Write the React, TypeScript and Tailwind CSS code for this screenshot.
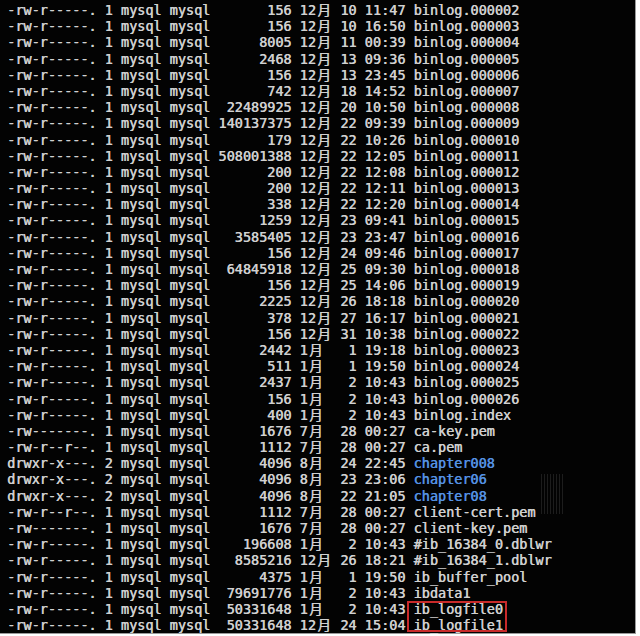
type Entry = {
  perms: string;
  links: number;
  size: number;
  month: number;
  day: number;
  time: string;
  name: string;
  dir?: boolean;
};

const RW = '-rw-r-----.';

const entries: Entry[] = [
  { perms: RW, links: 1, size: 156, month: 12, day: 10, time: '11:47', name: 'binlog.000002' },
  { perms: RW, links: 1, size: 156, month: 12, day: 10, time: '16:50', name: 'binlog.000003' },
  { perms: RW, links: 1, size: 8005, month: 12, day: 11, time: '00:39', name: 'binlog.000004' },
  { perms: RW, links: 1, size: 2468, month: 12, day: 13, time: '09:36', name: 'binlog.000005' },
  { perms: RW, links: 1, size: 156, month: 12, day: 13, time: '23:45', name: 'binlog.000006' },
  { perms: RW, links: 1, size: 742, month: 12, day: 18, time: '14:52', name: 'binlog.000007' },
  { perms: RW, links: 1, size: 22489925, month: 12, day: 20, time: '10:50', name: 'binlog.000008' },
  { perms: RW, links: 1, size: 140137375, month: 12, day: 22, time: '09:39', name: 'binlog.000009' },
  { perms: RW, links: 1, size: 179, month: 12, day: 22, time: '10:26', name: 'binlog.000010' },
  { perms: RW, links: 1, size: 508001388, month: 12, day: 22, time: '12:05', name: 'binlog.000011' },
  { perms: RW, links: 1, size: 200, month: 12, day: 22, time: '12:08', name: 'binlog.000012' },
  { perms: RW, links: 1, size: 200, month: 12, day: 22, time: '12:11', name: 'binlog.000013' },
  { perms: RW, links: 1, size: 338, month: 12, day: 22, time: '12:20', name: 'binlog.000014' },
  { perms: RW, links: 1, size: 1259, month: 12, day: 23, time: '09:41', name: 'binlog.000015' },
  { perms: RW, links: 1, size: 3585405, month: 12, day: 23, time: '23:47', name: 'binlog.000016' },
  { perms: RW, links: 1, size: 156, month: 12, day: 24, time: '09:46', name: 'binlog.000017' },
  { perms: RW, links: 1, size: 64845918, month: 12, day: 25, time: '09:30', name: 'binlog.000018' },
  { perms: RW, links: 1, size: 156, month: 12, day: 25, time: '14:06', name: 'binlog.000019' },
  { perms: RW, links: 1, size: 2225, month: 12, day: 26, time: '18:18', name: 'binlog.000020' },
  { perms: RW, links: 1, size: 378, month: 12, day: 27, time: '16:17', name: 'binlog.000021' },
  { perms: RW, links: 1, size: 156, month: 12, day: 31, time: '10:38', name: 'binlog.000022' },
  { perms: RW, links: 1, size: 2442, month: 1, day: 1, time: '19:18', name: 'binlog.000023' },
  { perms: RW, links: 1, size: 511, month: 1, day: 1, time: '19:50', name: 'binlog.000024' },
  { perms: RW, links: 1, size: 2437, month: 1, day: 2, time: '10:43', name: 'binlog.000025' },
  { perms: RW, links: 1, size: 156, month: 1, day: 2, time: '10:43', name: 'binlog.000026' },
  { perms: RW, links: 1, size: 400, month: 1, day: 2, time: '10:43', name: 'binlog.index' },
  { perms: '-rw-------.', links: 1, size: 1676, month: 7, day: 28, time: '00:27', name: 'ca-key.pem' },
  { perms: '-rw-r--r--.', links: 1, size: 1112, month: 7, day: 28, time: '00:27', name: 'ca.pem' },
  { perms: 'drwxr-x---.', links: 2, size: 4096, month: 8, day: 24, time: '22:45', name: 'chapter008', dir: true },
  { perms: 'drwxr-x---.', links: 2, size: 4096, month: 8, day: 23, time: '23:06', name: 'chapter06', dir: true },
  { perms: 'drwxr-x---.', links: 2, size: 4096, month: 8, day: 22, time: '21:05', name: 'chapter08', dir: true },
  { perms: '-rw-r--r--.', links: 1, size: 1112, month: 7, day: 28, time: '00:27', name: 'client-cert.pem' },
  { perms: '-rw-------.', links: 1, size: 1676, month: 7, day: 28, time: '00:27', name: 'client-key.pem' },
  { perms: RW, links: 1, size: 196608, month: 1, day: 2, time: '10:43', name: '#ib_16384_0.dblwr' },
  { perms: RW, links: 1, size: 8585216, month: 12, day: 26, time: '18:21', name: '#ib_16384_1.dblwr' },
  { perms: RW, links: 1, size: 4375, month: 1, day: 1, time: '19:50', name: 'ib_buffer_pool' },
  { perms: RW, links: 1, size: 79691776, month: 1, day: 2, time: '10:43', name: 'ibdata1' },
  { perms: RW, links: 1, size: 50331648, month: 1, day: 2, time: '10:43', name: 'ib_logfile0' },
  { perms: RW, links: 1, size: 50331648, month: 12, day: 24, time: '15:04', name: 'ib_logfile1' },
];

function Line({ e }: { e: Entry }) {
  const m = String(e.month);
  return (
    <div className="whitespace-pre h-[16.2px]">
      {`${e.perms} ${e.links} mysql mysql ${String(e.size).padStart(9, ' ')} ${m}`}
      {/* 月 takes two terminal cells */}
      <span className="inline-block w-[2ch] text-center">月</span>
      {`${m.length === 1 ? ' ' : ''} ${String(e.day).padStart(2, ' ')} ${e.time} `}
      <span className={e.dir ? 'text-[#5592e2]' : ''}>{e.name}</span>
    </div>
  );
}

export default function App() {
  return (
    <div className="w-[640px] h-[636px] bg-white overflow-hidden">
      <div className="relative w-[636px] h-[634px] bg-[#030303] border-r border-b border-[#9a9a9a] pl-[7px] pt-[2px] text-[13.5px] leading-[16.2px] text-[#d0d0d0] [text-shadow:0.5px_0_0_currentColor] font-['DejaVu_Sans_Mono','Noto_Sans_CJK_SC',monospace]">
        {entries.map((e) => (
          <Line key={e.name} e={e} />
        ))}

        {/* compression smear near the right side */}
        <div className="absolute left-[541px] top-[474px] w-[24px] h-[40px] opacity-40 bg-[repeating-linear-gradient(90deg,#444_0px,#444_1px,transparent_1px,transparent_3px)]" />

        {/* red highlight box */}
        <div className="absolute left-[407px] top-[601px] w-[100px] h-[31px] border-2 border-[#c92a2a]" />
      </div>
    </div>
  );
}
